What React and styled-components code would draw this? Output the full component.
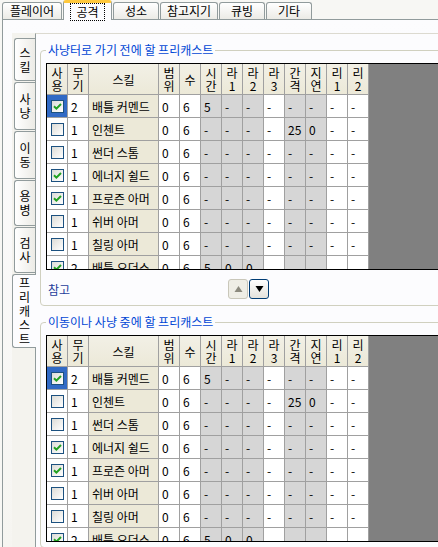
import React from 'react';
import styled, { createGlobalStyle } from 'styled-components';

const GlobalStyle = createGlobalStyle`
  html, body {
    margin: 0;
    padding: 0;
    background: #fcfcfe;
  }
  body {
    font-family: "Noto Sans CJK KR", "Noto Sans", sans-serif;
    font-size: 12px;
    color: #000;
  }
`;

const GRAY = '#d6d6d6';
const BEIGE = '#ece9d8';

const Window = styled.div`
  width: 438px;
  height: 547px;
  overflow: hidden;
  background: #f7f7f4;
`;

const TopTabs = styled.div`
  display: flex;
  align-items: flex-end;
  gap: 1px;
  height: 19px;
  padding-left: 2px;
`;

const TopTab = styled.div`
  position: relative;
  z-index: ${p => (p.$active ? 2 : 1)};
  box-sizing: border-box;
  width: ${p => p.$w}px;
  height: ${p => (p.$active ? 20 : 17)}px;
  margin-bottom: ${p => (p.$active ? -1 : 0)}px;
  display: flex;
  align-items: center;
  justify-content: center;
  border: 1px solid #919b9c;
  border-bottom: none;
  border-radius: 3px 3px 0 0;
  border-top: ${p => (p.$active ? '3px solid #ffc83c' : '1px solid #919b9c')};
  background: ${p => (p.$active ? '#fcfcfe' : 'linear-gradient(#ffffff, #ecebe6)')};
  font-size: 12px;
  line-height: 14px;
`;

const Focus = styled.span`
  outline: 1px dotted #000;
  outline-offset: 1px;
  padding: 0 4px;
`;

const TabPage = styled.div`
  margin-left: 2px;
  height: 528px;
  box-sizing: border-box;
  border-top: 1px solid #919b9c;
  border-left: 1px solid #919b9c;
  background: linear-gradient(#fcfcfe, #f6f5f1);
  padding: 13px 0 0 9px;
`;

const SideControl = styled.div`
  display: flex;
  height: 100%;
`;

const SideTabs = styled.div`
  display: flex;
  flex-direction: column;
  gap: 1px;
  width: 23px;
  flex-shrink: 0;
  padding-top: 5px;
  background: #f4f3ee;
`;

const SideTab = styled.div`
  position: relative;
  z-index: ${p => (p.$active ? 2 : 1)};
  box-sizing: border-box;
  height: ${p => p.$h}px;
  margin-left: ${p => (p.$active ? 0 : 2)}px;
  margin-right: ${p => (p.$active ? -1 : 0)}px;
  display: flex;
  flex-direction: column;
  align-items: center;
  justify-content: center;
  border: 1px solid #919b9c;
  border-right: none;
  border-radius: 3px 0 0 3px;
  background: ${p => (p.$active ? '#fcfcfe' : 'linear-gradient(90deg, #ffffff, #ecebe6)')};
  font-size: 12px;
  line-height: 14px;
`;

const SidePage = styled.div`
  flex: 1;
  box-sizing: border-box;
  border-top: 1px solid #dcdad0;
  border-left: 1px solid #919b9c;
  background: #fcfcfe;
  padding: 9px 0 0 4px;
  min-width: 460px;
`;

const Group = styled.fieldset`
  margin: ${p => (p.$first ? 0 : 9)}px 0 0 0;
  padding: 6px 5px 5px 5px;
  border: 1px solid #d0d0bf;
  border-radius: 4px;
  width: 440px;
`;

const Legend = styled.legend`
  padding: 0 2px;
  color: #0046d5;
  font-size: 12px;
  line-height: 14px;
`;

const Grid = styled.div`
  display: flex;
  height: 207px;
  box-sizing: border-box;
  border: 1px solid #000;
  overflow: hidden;
  background: #808080;
`;

const Table = styled.div`
  display: grid;
  grid-template-columns: 21px 21px 70px repeat(10, 21px);
  grid-template-rows: 31px;
  grid-auto-rows: 23px;
  flex-shrink: 0;
  align-content: start;
`;

const HeadCell = styled.div`
  box-sizing: border-box;
  display: flex;
  align-items: center;
  justify-content: center;
  text-align: center;
  white-space: pre-line;
  border-right: 1px solid #a0a0a0;
  border-bottom: 1px solid #a0a0a0;
  background: linear-gradient(#f2f0e6, ${BEIGE});
  line-height: 13px;
`;

const Cell = styled.div`
  box-sizing: border-box;
  display: flex;
  align-items: center;
  justify-content: ${p => (p.$center ? 'center' : 'flex-start')};
  padding-left: ${p => (p.$center ? 0 : 3)}px;
  border-right: 1px solid #a0a0a0;
  border-bottom: 1px solid #a0a0a0;
  background: ${p => p.$bg};
  white-space: nowrap;
  overflow: hidden;
`;

const Box = styled.span`
  display: flex;
  align-items: center;
  justify-content: center;
  width: 13px;
  height: 13px;
  box-sizing: border-box;
  border: 1px solid #1c5180;
  background: linear-gradient(135deg, #dcdcd7, #ffffff);
`;

const Footer = styled.div`
  display: flex;
  align-items: center;
  height: 22px;
  margin-top: 8px;
`;

const Note = styled.span`
  width: 182px;
  padding-left: 2px;
  box-sizing: border-box;
  color: #1f3e9b;
`;

const ArrowButton = styled.button`
  width: 20px;
  height: 20px;
  margin: 0 1px 0 0;
  padding: 0;
  display: flex;
  align-items: center;
  justify-content: center;
  box-sizing: border-box;
  border-radius: 3px;
  border: 1px solid ${p => (p.$enabled ? '#003c74' : '#c9c7ba')};
  background: ${p => (p.$enabled ? 'linear-gradient(#ffffff, #e3e2dc)' : '#efeee6')};
`;

const headers = ['사\n용', '무\n기', '스킬', '범\n위', '수', '시\n간', '라\n1', '라\n2', '라\n3', '간\n격', '지\n연', '리\n1', '리\n2'];
const colBg = ['#fff', '#fff', BEIGE, '#fff', '#fff', GRAY, GRAY, GRAY, '#fff', GRAY, GRAY, '#fff', '#fff'];

const D = '-';
const rows = [
  { on: true, v: ['2', '배틀 커멘드', '0', '6', '5', D, D, D, D, D, D, D] },
  { on: false, v: ['1', '인첸트', '0', '6', D, D, D, D, '25', '0', D, D] },
  { on: false, v: ['1', '썬더 스톰', '0', '6', D, D, D, D, D, D, D, D] },
  { on: true, v: ['1', '에너지 쉴드', '0', '6', D, D, D, D, D, D, D, D] },
  { on: true, v: ['1', '프로즌 아머', '0', '6', D, D, D, D, D, D, D, D] },
  { on: false, v: ['1', '쉬버 아머', '0', '6', D, D, D, D, D, D, D, D] },
  { on: false, v: ['1', '칠링 아머', '0', '6', D, D, D, D, D, D, D, D] },
  { on: true, v: ['2', '배틀 오더스', '0', '6', '5', '0', '0', D, D, D, D, D] },
];

const topTabs = [
  { label: '플레이어', w: 60 },
  { label: '공격', w: 49, active: true },
  { label: '성소', w: 46 },
  { label: '참고지기', w: 58 },
  { label: '큐빙', w: 46 },
  { label: '기타', w: 46 },
];

const sideTabs = [
  { label: '스킬', h: 43 },
  { label: '사냥', h: 48 },
  { label: '이동', h: 48 },
  { label: '용병', h: 46 },
  { label: '검사', h: 46 },
  { label: '프리캐스트', h: 74, active: true },
];

const Check = ({ on }) => (
  <Box>
    {on && (
      <svg width="9" height="9" viewBox="0 0 9 9">
        <path d="M1 4.2 L3.4 6.6 L8 2" fill="none" stroke="#21a121" strokeWidth="2" />
      </svg>
    )}
  </Box>
);

const SkillGrid = () => (
  <Grid>
    <Table>
      {headers.map((h, i) => (
        <HeadCell key={'h' + i}>{h}</HeadCell>
      ))}
      {rows.map((r, ri) => (
        <React.Fragment key={ri}>
          <Cell $center $bg={ri === 0 ? '#316ac5' : '#fff'}>
            <Check on={r.on} />
          </Cell>
          {r.v.map((val, ci) => (
            <Cell key={ci} $bg={colBg[ci + 1]}>{val}</Cell>
          ))}
        </React.Fragment>
      ))}
    </Table>
  </Grid>
);

const Arrow = ({ up, color }) => (
  <svg width="9" height="8" viewBox="0 0 9 8">
    <polygon points={up ? '4.5,1 8.5,7 0.5,7' : '0.5,1 8.5,1 4.5,7'} fill={color} />
  </svg>
);

export default function App() {
  return (
    <Window>
      <GlobalStyle />
      <TopTabs>
        {topTabs.map(t => (
          <TopTab key={t.label} $w={t.w} $active={t.active}>
            {t.active ? <Focus>{t.label}</Focus> : t.label}
          </TopTab>
        ))}
      </TopTabs>
      <TabPage>
        <SideControl>
          <SideTabs>
            {sideTabs.map(t => (
              <SideTab key={t.label} $h={t.h} $active={t.active}>
                {t.label.split('').map((c, i) => (
                  <span key={i}>{c}</span>
                ))}
              </SideTab>
            ))}
          </SideTabs>
          <SidePage>
            <Group $first>
              <Legend>사냥터로 가기 전에 할 프리캐스트</Legend>
              <SkillGrid />
              <Footer>
                <Note>참고</Note>
                <ArrowButton>
                  <Arrow up color="#8c8a7e" />
                </ArrowButton>
                <ArrowButton $enabled>
                  <Arrow color="#000" />
                </ArrowButton>
              </Footer>
            </Group>
            <Group>
              <Legend>이동이나 사냥 중에 할 프리캐스트</Legend>
              <SkillGrid />
            </Group>
          </SidePage>
        </SideControl>
      </TabPage>
    </Window>
  );
}
